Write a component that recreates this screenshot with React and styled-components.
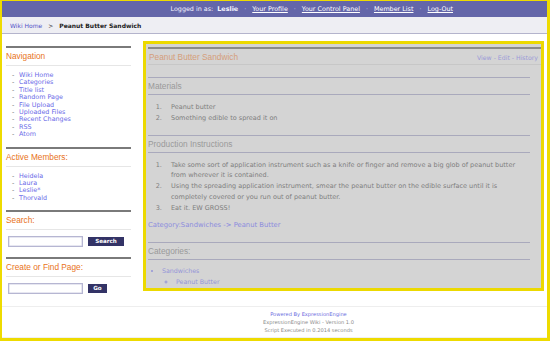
import React from 'react';
import styled, { createGlobalStyle } from 'styled-components';

const Global = createGlobalStyle`
  html, body { margin: 0; padding: 0; background: #fff; }
  * { box-sizing: border-box; }
`;

const verdana = `"DejaVu Sans", Verdana, sans-serif`;
const helv = `"Liberation Sans", Arial, sans-serif`;

const Frame = styled.div`
  width: 550px;
  height: 341px;
  border: solid #eedb00;
  border-width: 1px 3px 3px 2px;
  display: flex;
  flex-direction: column;
  background: #fff;
  overflow: hidden;
`;

const TopBar = styled.div`
  height: 16px;
  flex: none;
  background: #6466a9;
  display: flex;
  justify-content: flex-end;
  align-items: center;
  padding-right: 94px;
  font: 6.4px ${verdana};
  color: #f4f4ff;
  white-space: nowrap;
`;

const TopLink = styled.a`
  color: #fff;
  text-decoration: underline;
`;

const Dot = styled.span`
  margin: 0 6px;
  color: #c9c9ec;
`;

const Crumbs = styled.div`
  height: 17px;
  flex: none;
  background: #eeeef3;
  border-bottom: 1px solid #b4b4cc;
  display: flex;
  align-items: center;
  padding-left: 8px;
  font: 6px ${verdana};
  color: #222;
`;

const CrumbLink = styled.a`
  color: #5252c8;
`;

const CrumbSep = styled.span`
  margin: 0 6px;
`;

const Current = styled.b`
  font-weight: bold;
`;

const Body = styled.div`
  display: flex;
  align-items: flex-start;
  gap: 12px;
  padding: 7px 3px 0 4px;
`;

const Sidebar = styled.div`
  width: 125px;
  flex: none;
  margin-top: 5px;
`;

const Block = styled.div`
  border-top: 2px solid #7a7a7a;
`;

const BlockTitle = styled.div`
  font: 8.3px/10px ${helv};
  color: #e8731a;
  padding: 3px 0 4px;
  border-bottom: 1px solid #e6e6e6;
`;

const DashList = styled.ul`
  list-style: none;
  margin: 0;
  padding: 6px 0 8px 6px;
  font: 6.4px/7.4px ${verdana};
`;

const DashItem = styled.li`
  display: flex;
  &::before {
    content: '-';
    width: 7px;
    color: #666;
  }
`;

const SideLink = styled.a`
  color: #6a6ae8;
`;

const FormRow = styled.div`
  display: flex;
  align-items: center;
  gap: 5px;
  padding: ${(p) => (p.$last ? '6px 0 0 2px' : '6px 0 10px 2px')};
`;

const TextBox = styled.div`
  width: 75px;
  height: 11px;
  border: 1px solid #b6b6d2;
  box-shadow: inset 0 0 0 0.5px #d0d0e4;
  background: #fff;
`;

const Btn = styled.div`
  width: ${(p) => p.$w}px;
  height: 9px;
  background: #333366;
  color: #fff;
  font: bold 5.6px/9px ${verdana};
  text-align: center;
`;

const Main = styled.div`
  flex: 1;
  border: 3px solid #ecd900;
  background: #d4d4d4;
  padding: 3px 0 1px 2px;
`;

const TitleRow = styled.div`
  height: 18px;
  border-top: 2px solid #8a8a8a;
  border-bottom: 1px solid #c7c7c7;
  display: flex;
  justify-content: space-between;
  align-items: center;
  padding-right: 3px;
`;

const PageTitle = styled.div`
  font: 8.3px/10px ${helv};
  color: #d59e7b;
  padding-left: 1px;
`;

const Tabs = styled.div`
  font: 6.2px ${verdana};
  color: #9b9bd8;
  padding-top: 1px;
`;

const Section = styled.div`
  margin: ${(p) => p.$top}px 11px 0 0;
`;

const SectionHead = styled.div`
  border-top: 1px solid #a9a9bc;
  border-bottom: 1px solid #a9a9bc;
  padding: 3px 0;
  font: 8.3px/10px ${helv};
  color: #9a9a9a;
`;

const NumList = styled.ol`
  margin: 7px 0 0;
  padding-left: 16px;
  font: 6.5px/10.8px ${verdana};
  color: #7e7e7e;
  li { padding-left: 7px; }
`;

const CatLink = styled.div`
  margin-top: 6px;
  font: 6.8px/10px ${verdana};
  color: #8c8cde;
`;

const BulletList = styled.ul`
  margin: ${(p) => (p.$nested ? '0' : '5px 0 0')};
  padding-left: 14px;
  list-style: ${(p) => (p.$nested ? 'circle' : 'disc')};
  font: 6.3px/11px ${verdana};
  color: #9494d8;
`;

const Footer = styled.div`
  flex: 1;
  margin-top: 12px;
  border-top: 1px solid #eeeeee;
  border-bottom: 1px solid #f0f0f0;
  padding: 3px 0 0 68px;
  text-align: center;
  font: 5.1px/8px ${verdana};
  color: #8a8a8a;
`;

const FootLink = styled.div`
  color: #6a6ae0;
`;

const navItems = ['Wiki Home', 'Categories', 'Title list', 'Random Page', 'File Upload', 'Uploaded Files', 'Recent Changes', 'RSS', 'Atom'];
const members = ['Heidela', 'Laura', 'Leslie*', 'Thorvald'];

export default function App() {
  return (
    <>
      <Global />
      <Frame>
        <TopBar>
          <span>Logged in as:&nbsp;&nbsp;<b>Leslie</b></span>
          <Dot>·</Dot>
          <TopLink>Your Profile</TopLink>
          <Dot>·</Dot>
          <TopLink>Your Control Panel</TopLink>
          <Dot>·</Dot>
          <TopLink>Member List</TopLink>
          <Dot>·</Dot>
          <TopLink>Log-Out</TopLink>
        </TopBar>
        <Crumbs>
          <CrumbLink>Wiki Home</CrumbLink>
          <CrumbSep>&gt;</CrumbSep>
          <Current>Peanut Butter Sandwich</Current>
        </Crumbs>
        <Body>
          <Sidebar>
            <Block>
              <BlockTitle>Navigation</BlockTitle>
              <DashList>
                {navItems.map((n) => (
                  <DashItem key={n}><SideLink>{n}</SideLink></DashItem>
                ))}
              </DashList>
            </Block>
            <Block>
              <BlockTitle>Active Members:</BlockTitle>
              <DashList>
                {members.map((n) => (
                  <DashItem key={n}><SideLink>{n}</SideLink></DashItem>
                ))}
              </DashList>
            </Block>
            <Block>
              <BlockTitle>Search:</BlockTitle>
              <FormRow>
                <TextBox />
                <Btn $w={36}>Search</Btn>
              </FormRow>
            </Block>
            <Block>
              <BlockTitle>Create or Find Page:</BlockTitle>
              <FormRow $last>
                <TextBox />
                <Btn $w={19}>Go</Btn>
              </FormRow>
            </Block>
          </Sidebar>
          <Main>
            <TitleRow>
              <PageTitle>Peanut Butter Sandwich</PageTitle>
              <Tabs>View - Edit - History</Tabs>
            </TitleRow>
            <Section $top={12}>
              <SectionHead>Materials</SectionHead>
              <NumList>
                <li>Peanut butter</li>
                <li>Something edible to spread it on</li>
              </NumList>
            </Section>
            <Section $top={11}>
              <SectionHead>Production Instructions</SectionHead>
              <NumList>
                <li>Take some sort of application instrument such as a knife or finger and remove a big glob of peanut butter from wherever it is contained.</li>
                <li>Using the spreading application instrument, smear the peanut butter on the edible surface until it is completely covered or you run out of peanut butter.</li>
                <li>Eat it. EW GROSS!</li>
              </NumList>
              <CatLink>Category:Sandwiches -&gt; Peanut Butter</CatLink>
            </Section>
            <Section $top={12}>
              <SectionHead>Categories:</SectionHead>
              <BulletList>
                <li>
                  Sandwiches
                  <BulletList $nested>
                    <li>Peanut Butter</li>
                  </BulletList>
                </li>
              </BulletList>
            </Section>
          </Main>
        </Body>
        <Footer>
          <FootLink>Powered By ExpressionEngine</FootLink>
          <div>ExpressionEngine Wiki - Version 1.0</div>
          <div>Script Executed in 0.2014 seconds</div>
        </Footer>
      </Frame>
    </>
  );
}
